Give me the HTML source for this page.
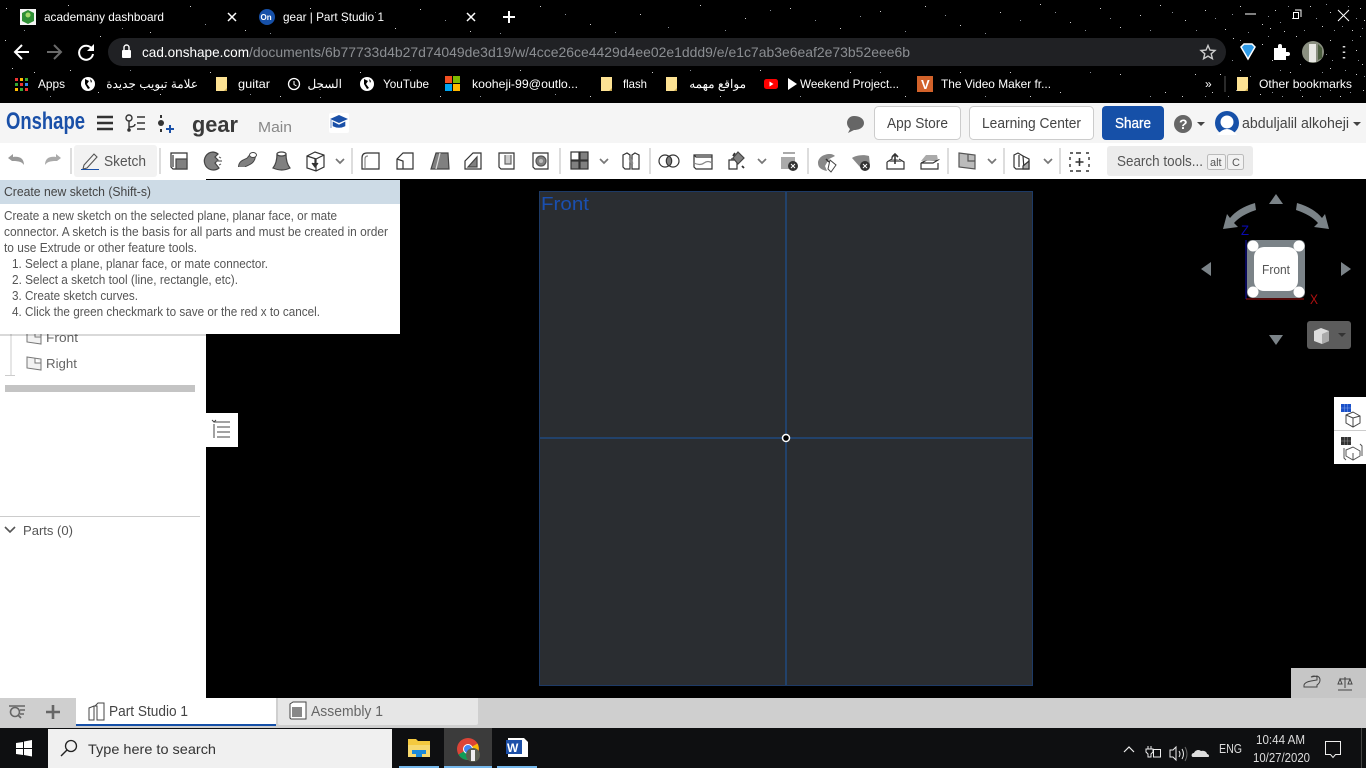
<!DOCTYPE html>
<html><head><meta charset="utf-8"><title>gear | Part Studio 1</title>
<style>
html,body{margin:0;padding:0;background:#000;width:1366px;height:768px;overflow:hidden}
svg{display:block;position:absolute;left:0;top:0}
text{font-family:"Liberation Sans","Noto Sans CJK SC",sans-serif;white-space:pre}
.w{fill:#fff;font-size:12px}
.tb{fill:none;stroke:#333;stroke-width:1.2}
</style></head><body>
<svg width="1366" height="768" viewBox="0 0 1366 768">
<rect width="1366" height="768" fill="#000"/>
<!-- stars -->
<g transform="translate(0 .5)">
<path fill="none" stroke="#fff" stroke-width="1" opacity=".8" d="M6 8h1M68 5h1M150 32h1M190 6h1M245 30h1M310 8h1M395 28h1M420 9h1M470 31h1M540 6h1M590 24h1M640 14h1M700 5h1M745 18h1M790 8h1M840 28h1M880 11h1M925 6h1M960 25h1M1000 12h1M1040 4h1M1070 22h1M1100 8h1M1120 27h1M1140 15h1M1160 5h1M1185 20h1M1205 10h1M1225 29h1M1240 6h1M1262 24h1M1275 10h1M1284 31h1M1310 6h1M1322 26h1M1330 12h1M1352 30h1M1360 8h1M1364 20h1M1233 38h1M1262 44h1M1272 60h1M1296 36h1M1330 40h1M1356 50h1M1362 64h1M1330 68h1M1240 70h1M1290 72h1M1260 94h1M1220 74h1M1356 74h1M1363 90h1M5 40h1M12 68h1M34 72h1M70 70h1M100 36h1M98 92h1M160 94h1M210 72h1M280 96h1M360 72h1M440 96h1M520 70h1M590 96h1M652 72h1M720 96h1M760 70h1M850 72h1M905 96h1M1010 72h1M1060 92h1M1120 74h1M1165 92h1M1195 74h1M1030 96h1M960 72h1M1182 96h1M1340 96h1M1302 96h1M1212 92h1M1338 20h1M1292 18h1M1270 28h1"/>
<path fill="none" stroke="#cfd8e6" stroke-width="1" opacity=".65" d="M24 30h1M90 12h1M122 28h1M205 24h1M270 33h1M345 22h1M375 12h1M445 20h1M500 33h1M565 14h1M615 32h1M668 27h1M725 30h1M770 10h1M815 20h1M860 16h1M905 31h1M945 15h1M985 33h1M1020 20h1M1055 12h1M1085 30h1M1110 18h1M1150 30h1M1172 12h1M1196 30h1M1215 18h1M1232 14h1M1248 32h1M1268 16h1M1280 22h1M1288 6h1M1304 30h1M1316 18h1M1326 4h1M1334 30h1M1342 26h1M1348 6h1M1356 18h1M1362 28h1M1240 40h1M1232 60h1M1268 36h1M1300 64h1M1326 54h1M1332 60h1M1352 40h1M1360 36h1M1358 60h1M1345 70h1M1322 72h1M1300 90h1M1280 70h1M1272 92h1M1250 76h1M1228 96h1M1236 90h1M1205 96h1M1350 92h1M1320 96h1M1282 96h1M1364 76h1M1330 90h1M50 96h1M130 70h1M250 94h1M320 97h1M410 70h1M480 96h1M555 94h1M690 70h1M800 96h1M880 72h1M985 96h1M1090 72h1M1150 96h1"/>
</g>

<!-- Chrome tabs -->
<rect x="20" y="9" width="16" height="16" fill="#f4f4f4"/><path d="M28 10l6 3v8l-6 3-6-3v-8z" fill="#2f8f35"/><circle cx="28" cy="15" r="2.5" fill="#a5d86a"/>
<text class="w" x="44" y="21" textLength="120" lengthAdjust="spacingAndGlyphs">academany dashboard</text>
<path d="M228 13l8 8M236 13l-8 8" stroke="#fff" stroke-width="1.5"/>
<circle cx="267" cy="17" r="8" fill="#1650a8"/><text x="260.500" y="20" fill="#fff" font-size="8" font-weight="700">On</text>
<text class="w" x="283" y="21" textLength="101" lengthAdjust="spacingAndGlyphs">gear | Part Studio 1</text>
<path d="M467 13l8 8M475 13l-8 8" stroke="#fff" stroke-width="1.5"/>
<path d="M509 11v12M503 17h12" stroke="#fff" stroke-width="2"/>
<path d="M1245 14h11M1295 10h6v7M1293.500 12.500h5v6h-5zM1338 10l11 11M1349 10l-11 11" fill="none" stroke="#fff" stroke-width="1"/>

<!-- Nav row -->
<path d="M29 52H16M22 45l-7 7 7 7" fill="none" stroke="#fff" stroke-width="2"/>
<path d="M47 52h13M54 45l7 7-7 7" fill="none" stroke="#6a6a6a" stroke-width="2"/>
<path d="M92 49a7 7 0 1 0 1 5" fill="none" stroke="#fff" stroke-width="2"/><path d="M94 44v7h-7z" fill="#fff"/>
<rect x="108" y="38" width="1118" height="28" rx="14" fill="#202124"/>
<rect x="122" y="50" width="9" height="8" rx="1" fill="#fff"/><path d="M124 50v-2.500a2.500 2.500 0 0 1 5 0V50" fill="none" stroke="#fff" stroke-width="1.400"/>
<text x="142" y="57" font-size="14" fill="#fff" textLength="107" lengthAdjust="spacingAndGlyphs">cad.onshape.com</text>
<text x="249" y="57" font-size="14" fill="#8b8e92" textLength="661" lengthAdjust="spacingAndGlyphs">/documents/6b77733d4b27d74049de3d19/w/4cce26ce4429d4ee02e1ddd9/e/e1c7ab3e6eaf2e73b52eee6b</text>
<path d="M1208 45.500l2 4.600 5 .4-3.800 3.300 1.200 4.900-4.400-2.600-4.400 2.600 1.200-4.900-3.800-3.300 5-.4z" fill="none" stroke="#ccc" stroke-width="1.400"/>
<path d="M1241 47l3-3h8l3 3-7 12z" fill="#2e9be8" stroke="#fff" stroke-width="1.500"/>
<path d="M1274 48h4v-2a2 2 0 0 1 4 0v2h4v4h2a2 2 0 0 1 0 4h-2v4h-12z" fill="#fff"/>
<circle cx="1313" cy="52" r="11" fill="#8a8f80"/><path d="M1309 44h7v18h-7z" fill="#e8e8e4"/><path d="M1318 44l4 4v10l-4 2z" fill="#4b5d3e"/>
<path d="M1344 46v1.500M1344 51.500v1.500M1344 57v1.500" stroke="#ddd" stroke-width="2.500"/>

<!-- Bookmarks -->
<g>
<path d="M15 78h3v3h-3z" fill="#e33"/><path d="M20 78h3v3h-3z" fill="#fb0"/><path d="M25 78h3v3h-3z" fill="#3a3"/><path d="M15 83h3v3h-3z" fill="#3a3"/><path d="M20 83h3v3h-3z" fill="#e33"/><path d="M25 83h3v3h-3z" fill="#38e"/><path d="M15 88h3v3h-3z" fill="#fb0"/><path d="M20 88h3v3h-3z" fill="#3a3"/><path d="M25 88h3v3h-3z" fill="#e33"/>
<text class="w" x="38" y="88" textLength="27" lengthAdjust="spacingAndGlyphs">Apps</text>
<circle cx="88" cy="84" r="7" fill="#fff"/><path d="M85 79l4 2-2 3 3 4-2 1-3-5zM90 79l2 2-1 2z" fill="#000"/>
<text class="w" x="198" y="88" direction="rtl" text-anchor="start">علامة تبويب جديدة</text>
<path d="M216 77h11v14h-11z" fill="#fde293"/><path d="M224 91l3-3v3z" fill="#c9a84e"/>
<text class="w" x="238" y="88" textLength="32" lengthAdjust="spacingAndGlyphs">guitar</text>
<circle cx="294" cy="84" r="5.500" fill="none" stroke="#fff" stroke-width="1.300"/><path d="M294 81v3.500l2.500 1.500" fill="none" stroke="#fff"/>
<text class="w" x="342" y="88" direction="rtl" text-anchor="start">السجل</text>
<circle cx="367" cy="84" r="7" fill="#fff"/><path d="M364 79l4 2-2 3 3 4-2 1-3-5zM369 79l2 2-1 2z" fill="#000"/>
<text class="w" x="383" y="88" textLength="46" lengthAdjust="spacingAndGlyphs">YouTube</text>
<rect x="445" y="76" width="7" height="7" fill="#f25022"/><rect x="453" y="76" width="7" height="7" fill="#7fba00"/><rect x="445" y="84" width="7" height="7" fill="#00a4ef"/><rect x="453" y="84" width="7" height="7" fill="#ffb900"/>
<text class="w" x="472" y="88" textLength="106" lengthAdjust="spacingAndGlyphs">kooheji-99@outlo...</text>
<path d="M601 77h11v14h-11z" fill="#fde293"/><path d="M609 91l3-3v3z" fill="#c9a84e"/>
<text class="w" x="623" y="88" textLength="24" lengthAdjust="spacingAndGlyphs">flash</text>
<path d="M666 77h11v14h-11z" fill="#fde293"/><path d="M674 91l3-3v3z" fill="#c9a84e"/>
<text class="w" x="746" y="88" direction="rtl" text-anchor="start">مواقع مهمه</text>
<rect x="764" y="79" width="14" height="10" rx="2.500" fill="#f00"/><path d="M769.500 81.500v5l4-2.500z" fill="#fff"/>
<path d="M788 78v12l9-6z" fill="#fff"/>
<text class="w" x="800" y="88" textLength="99" lengthAdjust="spacingAndGlyphs">Weekend Project...</text>
<rect x="917" y="76" width="16" height="16" fill="#d2622a"/><text x="921" y="89" font-size="13" font-weight="700" fill="#fff">V</text>
<text class="w" x="941" y="88" textLength="110" lengthAdjust="spacingAndGlyphs">The Video Maker fr...</text>
<text class="w" x="1205" y="88">»</text><path d="M1225 76v16" stroke="#555"/>
<path d="M1237 77h11v14h-11z" fill="#fde293"/><path d="M1245 91l3-3v3z" fill="#c9a84e"/>
<text class="w" x="1259" y="88" textLength="93" lengthAdjust="spacingAndGlyphs">Other bookmarks</text>
</g>

<!-- Onshape top bar -->
<rect y="103" width="1366" height="40" fill="#f5f5f5"/>
<rect y="143" width="1366" height="36" fill="#fff"/>
<text x="6" y="129" font-size="24" font-weight="700" fill="#1a50a8" textLength="79" lengthAdjust="spacingAndGlyphs">Onshape</text>
<path d="M97 117h16M97 123h16M97 129h16" stroke="#333" stroke-width="2.600"/>
<circle cx="129" cy="118" r="3" fill="none" stroke="#333" stroke-width="1.400"/><circle cx="129" cy="130" r="1.800" fill="#333"/><path d="M129 121v8M129 127q6 0 6-3M137 117h8M137 123h8M137 129h8" fill="none" stroke="#333" stroke-width="1.400"/>
<path d="M161 115v3M161 129v3" stroke="#333" stroke-width="2"/><circle cx="161" cy="123" r="3" fill="#333"/><path d="M170 125v8M166 129h8" stroke="#1a50a8" stroke-width="2"/>
<text x="192" y="132" font-size="22" font-weight="700" fill="#3a3a3a" textLength="46" lengthAdjust="spacingAndGlyphs">gear</text>
<text x="258" y="132" font-size="15" fill="#888" textLength="34" lengthAdjust="spacingAndGlyphs">Main</text>
<rect x="329" y="113" width="20" height="20" rx="2" fill="#fff"/><path d="M339 115l9 4-9 4-9-4z" fill="#1a50a8"/><path d="M333 122v4q6 3 12 0v-4l-6 3zM331 120v8" fill="#1a50a8" stroke="#1a50a8" stroke-width=".6"/>
<path d="M854 116c6 0 10 3 10 7s-4 7-10 7l-6 3 2-4c-1-1-3-3-3-6 0-4 3-7 7-7z" fill="#666"/>
<rect x="874.500" y="106.500" width="86" height="33" rx="4" fill="#fff" stroke="#ccc"/>
<text x="887" y="128" font-size="15" fill="#444" textLength="61" lengthAdjust="spacingAndGlyphs">App Store</text>
<rect x="969.500" y="106.500" width="124" height="33" rx="4" fill="#fff" stroke="#ccc"/>
<text x="982" y="128" font-size="15" fill="#444" textLength="99" lengthAdjust="spacingAndGlyphs">Learning Center</text>
<rect x="1102" y="106" width="62" height="34" rx="4" fill="#1650a8"/>
<text x="1115" y="128" font-size="15" fill="#fff" stroke="#fff" stroke-width=".3" textLength="36" lengthAdjust="spacingAndGlyphs">Share</text>
<circle cx="1183" cy="124" r="9" fill="#666"/><text x="1179" y="129" font-size="14" font-weight="700" fill="#fff">?</text>
<path d="M1197 122h8l-4 4z" fill="#444"/>
<circle cx="1227" cy="123" r="12" fill="#1650a8"/><circle cx="1227" cy="122" r="6.500" fill="#fff"/><path d="M1217 135q10-12 20 0z" fill="#fff"/>
<text x="1242" y="128" font-size="15" fill="#444" textLength="107" lengthAdjust="spacingAndGlyphs">abduljalil alkoheji</text>
<path d="M1353 122h8l-4 4z" fill="#444"/>

<!-- Toolbar -->
<path d="M11 160l-4-3 5-4v3c6-1 11 1 11 8-2-3-5-4-11-4z" fill="#999" transform="translate(1 1)"/>
<path d="M57 160l4-3-5-4v3c-6-1-11 1-11 8 2-3 5-4 11-4z" fill="#aaa" transform="translate(0 1)"/>
<path d="M71 148v26M160 148v26M352 148v26M560 148v26M650 148v26M808 148v26M948 148v26M1004 148v26M1060 148v26" stroke="#ddd" stroke-width="2"/>
<rect x="74" y="145" width="83" height="32" rx="3" fill="#f2f2f2"/>
<path d="M84 165l10-11 3 3-10 11-4 1z" fill="none" stroke="#555" stroke-width="1.100"/><path d="M81 169.500h18" stroke="#1a50a8"/>
<text x="104" y="166" font-size="15" fill="#555" textLength="42" lengthAdjust="spacingAndGlyphs">Sketch</text>

<g class="tb">
<path d="M171 153h16v16h-14l-2-2zM173 155v12"/><rect x="176" y="159" width="11" height="10" fill="#808080" stroke="#444"/>
<path d="M213 152a9 9 0 1 0 6 16l-4-5 3-3-3-3 3-3a9 9 0 0 0-5-2z" fill="#808080" stroke="#444"/><path d="M216 161h6M219 157l2 1M219 165l2-1" stroke="#666"/>
</g>
<path d="M242 167c0-6 9-3 10-11" fill="none" stroke="#444" stroke-width="8"/><path d="M242 167c0-6 9-3 10-11" fill="none" stroke="#808080" stroke-width="6"/>
<ellipse cx="253" cy="155" rx="3.500" ry="2.500" fill="#fff" stroke="#444"/>
<g class="tb">
<path d="M273 168q4-5 4-14h9q0 9 4 14q-8 4-17 0z" fill="#808080" stroke="#444"/><ellipse cx="281.500" cy="154" rx="4.500" ry="2" fill="#fff" stroke="#444"/>
<path d="M307 156l8-4 9 3v12l-8 4-9-3zM316 159v12M307 156l9 3 8-4"/><path d="M315 158v7M312 163l3 4 3-4" fill="#333" stroke="#333"/>
<path d="M362 169v-11q0-5 5-5h12v16z"/><path d="M365 168v-9q0-3 3-3" stroke="#888"/>
<path d="M397 169v-10l6-6h10v16zM397 159l6 2v8"/>
<path d="M431 169l5-16h12l1 16z" fill="#808080" stroke="#444"/><path d="M436 169l4-16" stroke="#ddd"/>
<path d="M465 169v-8l8-8h8v16z"/><path d="M468 167l9-10v10z" fill="#808080" stroke="#444"/>
<path d="M499 153h15v16h-13l-2-2z"/><path d="M505 155v9h6v-9" stroke="#666" fill="#ccc"/>
<path d="M533 153h15v16h-13l-2-2z"/><circle cx="541" cy="161" r="5" fill="#808080" stroke="#555"/><circle cx="541" cy="161" r="2" fill="#bbb" stroke="none"/>
<rect x="571" y="152" width="8" height="8" fill="#fff"/><rect x="580" y="152" width="8" height="8" fill="#808080"/><rect x="571" y="161" width="8" height="8" fill="#808080"/><rect x="580" y="161" width="8" height="8" fill="#808080"/>
<path d="M623 155l4-2 3 2v14h-5l-2-2zM632 155l3-2 4 2v14h-7z"/><path d="M630 158l2 6" stroke="#888" stroke-width="3"/>
<circle cx="665" cy="161" r="6"/><circle cx="673" cy="161" r="6"/><path d="M669 156a6 6 0 0 1 0 10 6 6 0 0 1 0-10z" fill="#808080"/>
<path d="M694 155h18v14h-16l-2-2zM694 155l2 2h16"/><path d="M694 163q6 3 10 0t8 0" stroke="#888"/>
<path d="M729 160h8v9h-8zM732 160v-2"/><path d="M738 152l6 6-6 6-5-6z" fill="#808080" stroke="#444"/><path d="M733 156l2-3M742 166l2 2" stroke="#333" stroke-width="1.800"/>
</g>
<path d="M781 157h14v12h-14z" fill="#aaa"/><path d="M783 153h12" stroke="#aaa" stroke-width="2"/><circle cx="793" cy="166" r="5" fill="#333"/><path d="M791 164l4 4M795 164l-4 4" stroke="#fff"/>
<path d="M818 163c0-5 5-9 12-9 2 0 4 1 5 2l-6 3-4 7 2 5c-5-1-9-3-9-8z" fill="#888"/><path d="M830 160l6 5-5 7-3-3z" fill="#fff" stroke="#444"/><path d="M826 159l3 3" stroke="#333" stroke-width="1.500"/>
<path d="M852 158c3-2 10-4 17-2l1 9-10 2z" fill="#888"/><circle cx="865" cy="166" r="5" fill="#333"/><path d="M863 164l4 4M867 164l-4 4" stroke="#fff"/>
<g class="tb"><path d="M887 162l5-3v-2M887 162v7h17v-7l-5-3"/><path d="M889 162q6-6 13 0" fill="#808080" stroke="none"/><path d="M895 164v-9M892 157l3-3 3 3" stroke-width="1.600"/>
<path d="M921 163l6-3h11l-5 3zM921 163v6h17v-6"/><path d="M921 161l5-6h11l1 5z" fill="#aaa" stroke="none"/>
<path d="M959 153l16 2v14l-16-2z" fill="#bbb" stroke="#555"/><path d="M968 154v7h7" stroke="#555"/>
<path d="M1014 155l4-2 5 3 1 13h-8l-2-2zM1019 155v12M1023 156l6 3v10h-6"/><path d="M1023 166l6-5v8h-6z" fill="#aaa"/>
</g>
<path d="M1070 153h3M1076 153h5M1086 153h3M1070 171h3M1076 171h5M1086 171h3M1070 157v3M1070 164v3M1089 157v3M1089 164v3" stroke="#333" stroke-width="1.400"/>
<path d="M1079.500 158v8M1075.500 162h8" stroke="#333" stroke-width="1.600"/>
<path d="M336 159l4 4 4-4M600 159l4 4 4-4M758 159l4 4 4-4M988 159l4 4 4-4M1044 159l4 4 4-4" fill="none" stroke="#777" stroke-width="1.700"/>
<rect x="1107" y="146" width="146" height="30" rx="3" fill="#ececec"/>
<text x="1117" y="166" font-size="15" fill="#555" textLength="86" lengthAdjust="spacingAndGlyphs">Search tools...</text>
<rect x="1207.500" y="154.500" width="18" height="15" rx="2" fill="#f2f2f2" stroke="#bbb"/><text x="1210" y="166" font-size="11" fill="#555">alt</text>
<rect x="1227.500" y="154.500" width="16" height="15" rx="2" fill="#f2f2f2" stroke="#bbb"/><text x="1232" y="166" font-size="11" fill="#555">C</text>

<!-- Left panel -->
<rect y="179" width="206" height="519" fill="#fff"/>
<path d="M11 334v41M5 375.500h10" stroke="#ccc"/>
<g fill="#f2f2f2" stroke="#777"><path d="M27 331l14 2v11l-14-2zM35 332v5h6"/><path d="M27 357l14 2v11l-14-2zM35 358v5h6"/></g>
<text x="46" y="342" font-size="13" fill="#666" textLength="32" lengthAdjust="spacingAndGlyphs">Front</text>
<text x="46" y="368" font-size="13" fill="#666" textLength="31" lengthAdjust="spacingAndGlyphs">Right</text>
<rect x="5" y="385" width="190" height="7" fill="#c4c4c4"/>
<rect x="206" y="413" width="32" height="34" fill="#fff"/>
<path d="M214 422h16M217 427h13M217 432h13M217 437h13M214 424v14M212 420l2 2 2-2" fill="none" stroke="#444"/>
<path d="M0 516.500h200" stroke="#ccc"/>
<path d="M5 527l5 5 5-5" fill="none" stroke="#555" stroke-width="1.600"/>
<text x="23" y="535" font-size="13" fill="#555" textLength="50" lengthAdjust="spacingAndGlyphs">Parts (0)</text>

<!-- Viewport sketch plane -->
<rect x="539.500" y="191.500" width="493" height="494" fill="#2a2d31" stroke="#1d3a66"/>
<path d="M786 192v493M540 438h492" stroke="#20497f" stroke-width="1.500"/>
<circle cx="786" cy="438" r="3.500" fill="#000" stroke="#fff" stroke-width="1.500"/>
<text x="541" y="210" font-size="18" fill="#1a4fb0" textLength="48" lengthAdjust="spacingAndGlyphs">Front</text>

<!-- Tooltip -->
<rect x="0" y="181" width="402" height="155" fill="#000" opacity=".15"/>
<rect x="0" y="180" width="400" height="154" fill="#fff"/>
<rect x="0" y="180" width="400" height="24" fill="#cddbe6"/>
<text x="4" y="196" font-size="13" fill="#444" textLength="147" lengthAdjust="spacingAndGlyphs">Create new sketch (Shift-s)</text>
<g font-size="13" fill="#555">
<text x="4" y="220" textLength="333" lengthAdjust="spacingAndGlyphs">Create a new sketch on the selected plane, planar face, or mate</text>
<text x="4" y="236" textLength="384" lengthAdjust="spacingAndGlyphs">connector. A sketch is the basis for all parts and must be created in order</text>
<text x="4" y="252" textLength="193" lengthAdjust="spacingAndGlyphs">to use Extrude or other feature tools.</text>
<text x="12" y="268" textLength="256" lengthAdjust="spacingAndGlyphs">1. Select a plane, planar face, or mate connector.</text>
<text x="12" y="284" textLength="226" lengthAdjust="spacingAndGlyphs">2. Select a sketch tool (line, rectangle, etc).</text>
<text x="12" y="300" textLength="126" lengthAdjust="spacingAndGlyphs">3. Create sketch curves.</text>
<text x="12" y="316" textLength="308" lengthAdjust="spacingAndGlyphs">4. Click the green checkmark to save or the red x to cancel.</text>
</g>

<!-- View cube -->
<g fill="#7b8388">
<path d="M1276 194l7 10h-14z"/><path d="M1276 345l7-10h-14z"/><path d="M1201 269l10-7v14z"/><path d="M1351 269l-10-7v14z"/>
<path d="M1255 203q-17 5-25 15l-3-4-4 15 15-2-4-4q7-8 22-13z"/><path d="M1297 203q17 5 25 15l3-4 4 15-15-2 4-4q-7-8-22-13z"/>
</g>
<path d="M1246 240v59" stroke="#1010b0"/><path d="M1246 299h58" stroke="#a01010"/>
<text x="1241" y="235" font-size="14" fill="#0a0ab0" textLength="8" lengthAdjust="spacingAndGlyphs">Z</text>
<text x="1310" y="304" font-size="14" fill="#b01010" textLength="8" lengthAdjust="spacingAndGlyphs">X</text>
<rect x="1247" y="240" width="58" height="58" rx="5" fill="#7b8388"/>
<rect x="1254" y="247" width="44" height="44" rx="10" fill="#fff"/>
<circle cx="1253" cy="246" r="5.500" fill="#fff"/><circle cx="1299" cy="246" r="5.500" fill="#fff"/><circle cx="1253" cy="292" r="5.500" fill="#fff"/><circle cx="1299" cy="292" r="5.500" fill="#fff"/>
<text x="1262" y="274" font-size="13" fill="#555" textLength="28" lengthAdjust="spacingAndGlyphs">Front</text>
<rect x="1307" y="321" width="44" height="28" rx="3" fill="#5c5c5c"/>
<path d="M1314 331l7-3 8 3v10l-7 3-8-3z" fill="#ddd"/><path d="M1322 334v10l7-3v-10z" fill="#aaa"/><path d="M1338 333h8l-4 4z" fill="#333"/>

<!-- Right side buttons -->
<rect x="1334" y="397" width="32" height="67" fill="#fff"/><path d="M1334 430.500h32" stroke="#ccc"/>
<rect x="1341" y="404" width="10" height="8" fill="#1a50c8"/><path d="M1341 408h10M1344.500 404v8M1347.500 404v8" stroke="#9db8ee" stroke-width=".4"/>
<path d="M1346 415l7-3 7 4v7l-7 4-7-4zM1353 418v9M1346 415l7 3 7-2" fill="none" stroke="#444"/>
<rect x="1341" y="437" width="10" height="8" fill="#333"/><path d="M1341 441h10M1344.500 437v8M1347.500 437v8" stroke="#aaa" stroke-width=".4"/>
<path d="M1346 450l7-3 7 4v5l-7 4-7-4zM1353 453v7M1344 448v10l2 2M1360 444l2 2v10" fill="none" stroke="#555"/>

<!-- Bottom right -->
<rect x="1291" y="668" width="75" height="30" fill="#c6c6c6"/>
<path d="M1304 685q1-3 7-4l6-1v-3q-3-2-6 0l6-1q3 1 3 4t-3 5v2h-13z" fill="none" stroke="#444"/><path d="M1306 687h9" stroke="#444" stroke-dasharray="1 1"/>
<path d="M1345 677v11M1338 690h14M1340 679h10M1340 679l-2 5h4zM1350 679l-2 5h4z" fill="none" stroke="#444"/>

<!-- Tab bar -->
<rect y="698" width="1366" height="30" fill="#cfcfcf"/>
<path d="M9 706h16M20 710h5M20 714h4" stroke="#666" stroke-width="1.500"/><circle cx="15" cy="712" r="4.500" fill="none" stroke="#666" stroke-width="1.600"/><path d="M18 715l3 3" stroke="#666" stroke-width="1.800"/>
<path d="M53 705v14M46 712h14" stroke="#666" stroke-width="2.600"/>
<path d="M76 698h200v25q0 2-2 2H78q-2 0-2-2z" fill="#fff"/>
<path d="M76 725h200" stroke="#1650a8" stroke-width="2"/>
<path d="M89 708l5-2v14h-5zM95 706l3-3h6v17h-7v-14z" fill="none" stroke="#444"/>
<text x="109" y="716" font-size="15" fill="#444" textLength="79" lengthAdjust="spacingAndGlyphs">Part Studio 1</text>
<path d="M278 698h200v25q0 2-2 2H280q-2 0-2-2z" fill="#e6e6e6"/>
<path d="M290 704l3-2h13v17h-15l-1-1z" fill="#fff" stroke="#444"/><path d="M292 707h10v10h-10z" fill="#888"/>
<text x="311" y="716" font-size="15" fill="#666" textLength="72" lengthAdjust="spacingAndGlyphs">Assembly 1</text>

<!-- Taskbar -->
<rect y="728" width="1366" height="40" fill="#0e0f11"/>
<path d="M16 743l7-1v6h-7zM24 741.500l8-1.500v8h-8zM16 749h7v6l-7-1zM24 749h8v7.500l-8-1.500z" fill="#fff"/>
<rect x="48" y="729" width="344" height="39" fill="#f0f0f0"/>
<circle cx="71" cy="746" r="5.500" fill="none" stroke="#222" stroke-width="1.300"/><path d="M67 750l-6 6" stroke="#222" stroke-width="1.400"/>
<text x="88" y="754" font-size="14" fill="#333" textLength="128" lengthAdjust="spacingAndGlyphs">Type here to search</text>
<path d="M408 739h8l2 2h12v16h-22z" fill="#f4c93f"/><path d="M408 745h22v12h-22z" fill="#f7d96f"/><path d="M412 750h14v4h-4v3h-6v-3h-4z" fill="#1c8ad9"/>
<rect x="444" y="728" width="48" height="40" fill="#3b3b3b"/>
<circle cx="468" cy="749" r="11" fill="#db4437"/><path d="M468 749l-9.500 5.500a11 11 0 0 0 9 5.500z" fill="#0f9d58"/><path d="M468 749l9.500-5.500a11 11 0 0 1-5 15z" fill="#fbbc05"/><circle cx="468" cy="749" r="4.500" fill="#4285f4" stroke="#fff"/>
<circle cx="473" cy="755" r="7" fill="#5a5f50"/><path d="M471 750h4v11h-4z" fill="#eee"/>
<path d="M508 738h16l4 4v15h-20z" fill="#fff"/><rect x="506" y="740" width="16" height="14" fill="#1c4fa8"/><text x="507" y="752" font-size="12" font-weight="700" fill="#fff">W</text>
<path d="M399 767h40M444 767h48M497 767h40" stroke="#76b9ed" stroke-width="2"/>
<path d="M1124 752l5-5 5 5" fill="none" stroke="#eee" stroke-width="1.200"/>
<path d="M1148 746v3M1151 746v3M1146 749h7v3l-2 2v3h-3v-3l-2-2z" fill="none" stroke="#eee"/><rect x="1153.500" y="749.500" width="7" height="7.500" fill="none" stroke="#eee"/>
<path d="M1170 750h3l3-3v13l-3-3h-3zM1179 751q2 3 0 6M1182 749q3 5 0 10" fill="none" stroke="#eee"/><path d="M1185 747q4 7 0 14" fill="none" stroke="#666"/>
<path d="M1193 757c-2 0-2-4 1-4 1-3 5-4 7-2 3-1 6 1 6 3 2 0 3 3 1 3z" fill="#ddd"/>
<text x="1219" y="753" font-size="13" fill="#ddd" textLength="23" lengthAdjust="spacingAndGlyphs">ENG</text>
<text x="1256" y="744" font-size="13" fill="#ddd" textLength="49" lengthAdjust="spacingAndGlyphs">10:44 AM</text>
<text x="1253" y="762" font-size="13" fill="#ddd" textLength="57" lengthAdjust="spacingAndGlyphs">10/27/2020</text>
<path d="M1325.500 741.500h15v13h-5l-2.500 3-2.500-3h-5z" fill="none" stroke="#eee"/>
<path d="M1361.500 728v40" stroke="#444"/>
</svg>
</body></html>
